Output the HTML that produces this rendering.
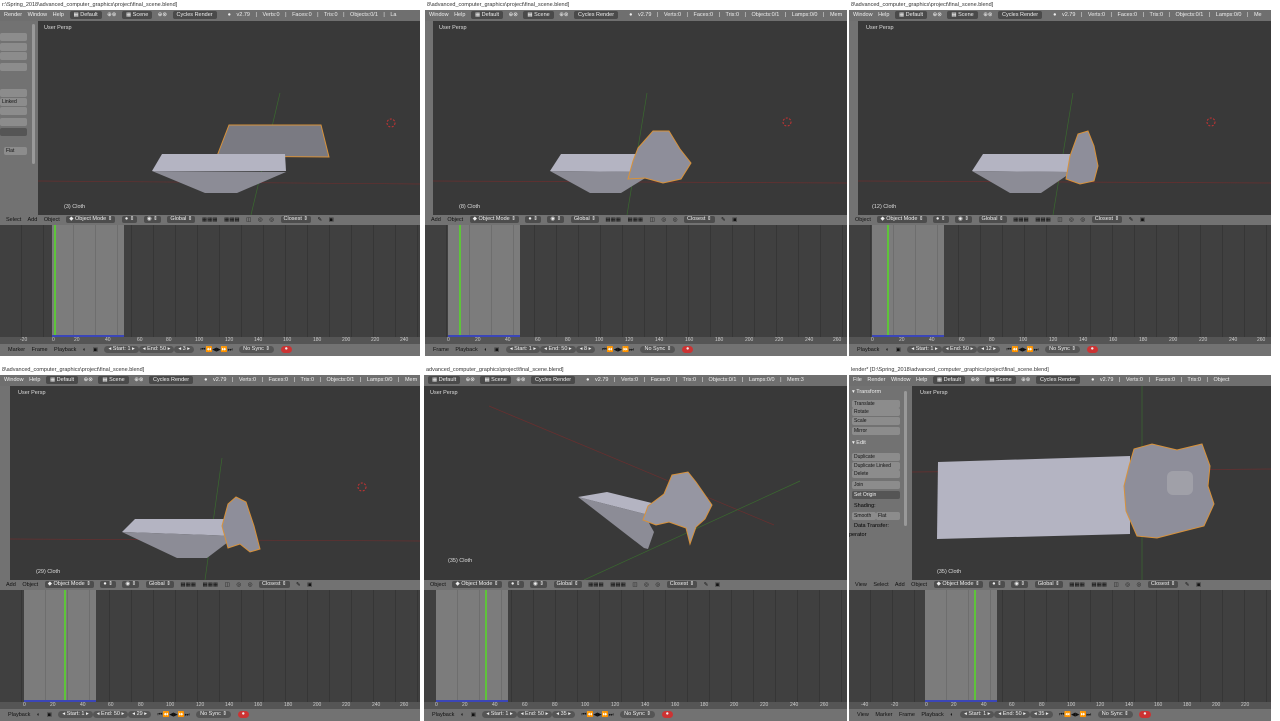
<!DOCTYPE html>
<html><head><meta charset="utf-8"><style>
*{margin:0;padding:0;box-sizing:border-box}
body{width:1280px;height:720px;background:#fff;position:relative;overflow:hidden;font-family:"Liberation Sans",sans-serif;font-size:5.5px;color:#000}
.p{position:absolute;height:356px;overflow:hidden;background:#fff}
.t{position:absolute;left:0;right:0;top:0;height:10px;font-size:5.5px;color:#333;line-height:10px;padding-left:2px;white-space:nowrap}
.h{position:absolute;left:0;right:0;top:10px;height:11px;background:#6f6f6f;color:#eee;line-height:11px;white-space:nowrap;padding-left:4px;word-spacing:4px}
.h b{display:inline-block;background:#4a4a4a;border-radius:2px;padding:0 4px;font-weight:normal;line-height:8px;height:8px;vertical-align:middle;word-spacing:0}
.v{position:absolute;left:0;right:0;top:21px;height:194px;background:#393939;overflow:hidden}
.v svg{position:absolute;left:0;top:0}
.lab{position:absolute;color:#ddd;font-size:5.5px}
.sh{position:absolute;left:0;top:21px;height:194px;background:#727272}
.h3{position:absolute;left:0;right:0;top:215px;height:10px;background:#727272;color:#111;line-height:10px;white-space:nowrap;padding-left:6px;word-spacing:5px}
.h3 b{display:inline-block;background:#4d4d4d;color:#eee;border-radius:2px;font-weight:normal;line-height:7px;padding:0 3px;vertical-align:middle;word-spacing:0}
.tl{position:absolute;left:0;right:0;top:225px;height:112px;background:#404040 repeating-linear-gradient(90deg,transparent 0 21px,#363636 21px 22px)}
.band{position:absolute;top:0;height:112px;background:#7c7c7c repeating-linear-gradient(90deg,transparent 0 21px,#6e6e6e 21px 22px)}
.gl{position:absolute;top:0;height:112px;width:2px;background:#5ec43a}
.bl{position:absolute;bottom:0;height:2px;background:#3b46b8}
.r{position:absolute;left:0;right:0;top:337px;height:7px;background:#555;color:#ccc;font-size:5px;line-height:7px;white-space:nowrap}
.r span{position:absolute}
.bh{position:absolute;left:0;right:0;top:344px;height:12px;background:#727272;color:#111;line-height:12px;white-space:nowrap;padding-left:8px;word-spacing:5px}
.bh b{display:inline-block;background:#555;color:#eee;border-radius:4px;font-weight:normal;line-height:7px;padding:0 4px;vertical-align:middle;word-spacing:0}
.btn{position:absolute;background:#8c8c8c;border-radius:2px;height:8px;color:#111;font-size:5px;line-height:8px;padding-left:2px}
</style></head><body>

<!-- Panel A -->
<div class="p" style="left:0;top:0;width:420px">
<div class="t">r:\Spring_2018\advanced_computer_graphics\project\final_scene.blend]</div>
<div class="h">Render Window Help <b>▦ Default</b> ⊕⊗ <b>▦ Scene</b> ⊕⊗ <b>Cycles Render</b> &nbsp;● v2.79 | Verts:0 | Faces:0 | Tris:0 | Objects:0/1 | La</div>
<div class="v" style="left:38px">
<svg width="382" height="194">
<line x1="0" y1="160" x2="382" y2="163" stroke="#6a2f2f" stroke-width="0.7"/>
<line x1="242" y1="72" x2="213" y2="194" stroke="#3a6a2f" stroke-width="0.7"/>
<polygon points="179,135 191,104 283,104 291,136" fill="#7a7a82" stroke="#d8923a" stroke-width="1"/>
<polygon points="114,150 124,133 247,133 248,150" fill="#b4b4c2"/>
<polygon points="114,150 248,151 199,172 167,172" fill="#8c8c96"/>
<circle cx="353" cy="102" r="4" fill="none" stroke="#c33" stroke-width="1" stroke-dasharray="2 1.5"/>
</svg>
<div class="lab" style="left:6px;top:4px">User Persp</div>
<div class="lab" style="left:26px;top:183px">(3) Cloth</div>
</div>
<div class="sh" style="width:38px">
<div class="btn" style="left:0;top:12px;width:27px"></div><div class="btn" style="left:0;top:22px;width:27px"></div><div class="btn" style="left:0;top:31px;width:27px"></div><div class="btn" style="left:0;top:42px;width:27px"></div>
<div class="btn" style="left:0;top:68px;width:27px"></div><div class="btn" style="left:0;top:77px;width:27px">Linked</div><div class="btn" style="left:0;top:86px;width:27px"></div><div class="btn" style="left:0;top:97px;width:27px"></div><div class="btn" style="left:0;top:107px;width:27px;background:#555"></div>
<div class="btn" style="left:4px;top:126px;width:23px">Flat</div>
<div style="position:absolute;left:32px;top:3px;width:3px;height:140px;background:#999;border-radius:2px"></div>
</div>
<div class="h3">Select Add Object <b>◆ Object Mode ⇕</b> <b>● ⇕</b> <b>◉ ⇕</b> <b>Global ⇕</b> ▦▦▦ ▦▦▦ ◫ ◎ ◎ <b>Closest ⇕</b> ✎ ▣</div>
<div class="tl"><div class="band" style="left:52px;width:72px"></div><div class="gl" style="left:54px"></div><div class="bl" style="left:52px;width:72px"></div></div>
<div class="r"><span style="left:20px">-20</span><span style="left:52px">0</span><span style="left:74px">20</span><span style="left:105px">40</span><span style="left:137px">60</span><span style="left:166px">80</span><span style="left:195px">100</span><span style="left:225px">120</span><span style="left:254px">140</span><span style="left:283px">160</span><span style="left:313px">180</span><span style="left:342px">200</span><span style="left:371px">220</span><span style="left:400px">240</span></div>
<div class="bh">Marker Frame Playback ◐ ▣ <b>◂ Start: 1 ▸</b><b>◂ End: 50 ▸</b><b>◂ 3 ▸</b> ⏮⏪◀▶⏩⏭ <b>No Sync ⇕</b> <b style="background:#c33">●</b></div>
</div>

<!-- Panel B -->
<div class="p" style="left:425px;top:0;width:422px">
<div class="t">8\advanced_computer_graphics\project\final_scene.blend]</div>
<div class="h">Window Help <b>▦ Default</b> ⊕⊗ <b>▦ Scene</b> ⊕⊗ <b>Cycles Render</b> &nbsp;● v2.79 | Verts:0 | Faces:0 | Tris:0 | Objects:0/1 | Lamps:0/0 | Mem</div>
<div class="v" style="left:8px">
<svg width="414" height="194">
<line x1="0" y1="160" x2="414" y2="162" stroke="#6a2f2f" stroke-width="0.7"/>
<line x1="214" y1="72" x2="194" y2="194" stroke="#3a6a2f" stroke-width="0.7"/>
<polygon points="117,150 128,133 220,133 222,151" fill="#b4b4c2"/>
<polygon points="117,150 222,151 188,172 157,172" fill="#8c8c96"/>
<polygon points="205,127 220,110 236,110 247,128 258,142 248,158 230,162 212,157 195,158 200,140" fill="#8e8e9a" stroke="#d8923a" stroke-width="1"/>
<circle cx="354" cy="101" r="4" fill="none" stroke="#c33" stroke-width="1" stroke-dasharray="2 1.5"/>
</svg>
<div class="lab" style="left:6px;top:4px">User Persp</div>
<div class="lab" style="left:26px;top:183px">(8) Cloth</div>
</div>
<div class="sh" style="width:8px"></div>
<div class="h3">Add Object <b>◆ Object Mode ⇕</b> <b>● ⇕</b> <b>◉ ⇕</b> <b>Global ⇕</b> ▦▦▦ ▦▦▦ ◫ ◎ ◎ <b>Closest ⇕</b> ✎ ▣</div>
<div class="tl"><div class="band" style="left:23px;width:72px"></div><div class="gl" style="left:34px"></div><div class="bl" style="left:23px;width:72px"></div></div>
<div class="r"><span style="left:22px">0</span><span style="left:50px">20</span><span style="left:80px">40</span><span style="left:110px">60</span><span style="left:140px">80</span><span style="left:170px">100</span><span style="left:200px">120</span><span style="left:230px">140</span><span style="left:260px">160</span><span style="left:290px">180</span><span style="left:320px">200</span><span style="left:350px">220</span><span style="left:380px">240</span><span style="left:408px">260</span></div>
<div class="bh">Frame Playback ◐ ▣ <b>◂ Start: 1 ▸</b><b>◂ End: 50 ▸</b><b>◂ 8 ▸</b> ⏮⏪◀▶⏩⏭ <b>No Sync ⇕</b> <b style="background:#c33">●</b></div>
</div>

<!-- Panel C -->
<div class="p" style="left:849px;top:0;width:422px">
<div class="t">8\advanced_computer_graphics\project\final_scene.blend]</div>
<div class="h">Window Help <b>▦ Default</b> ⊕⊗ <b>▦ Scene</b> ⊕⊗ <b>Cycles Render</b> &nbsp;● v2.79 | Verts:0 | Faces:0 | Tris:0 | Objects:0/1 | Lamps:0/0 | Me</div>
<div class="v" style="left:9px">
<svg width="413" height="194">
<line x1="0" y1="160" x2="413" y2="162" stroke="#6a2f2f" stroke-width="0.7"/>
<line x1="215" y1="72" x2="195" y2="194" stroke="#3a6a2f" stroke-width="0.7"/>
<polygon points="114,150 125,133 212,133 214,151" fill="#b4b4c2"/>
<polygon points="114,150 214,151 183,172 152,172" fill="#8c8c96"/>
<polygon points="220,113 230,110 236,125 240,145 236,160 222,163 208,158 212,135" fill="#8e8e9a" stroke="#d8923a" stroke-width="1"/>
<circle cx="353" cy="101" r="4" fill="none" stroke="#c33" stroke-width="1" stroke-dasharray="2 1.5"/>
</svg>
<div class="lab" style="left:8px;top:4px">User Persp</div>
<div class="lab" style="left:14px;top:183px">(12) Cloth</div>
</div>
<div class="sh" style="width:9px"></div>
<div class="h3">Object <b>◆ Object Mode ⇕</b> <b>● ⇕</b> <b>◉ ⇕</b> <b>Global ⇕</b> ▦▦▦ ▦▦▦ ◫ ◎ ◎ <b>Closest ⇕</b> ✎ ▣</div>
<div class="tl"><div class="band" style="left:23px;width:72px"></div><div class="gl" style="left:38px"></div><div class="bl" style="left:23px;width:72px"></div></div>
<div class="r"><span style="left:22px">0</span><span style="left:50px">20</span><span style="left:80px">40</span><span style="left:110px">60</span><span style="left:140px">80</span><span style="left:170px">100</span><span style="left:200px">120</span><span style="left:230px">140</span><span style="left:260px">160</span><span style="left:290px">180</span><span style="left:320px">200</span><span style="left:350px">220</span><span style="left:380px">240</span><span style="left:408px">260</span></div>
<div class="bh">Playback ◐ ▣ <b>◂ Start: 1 ▸</b><b>◂ End: 50 ▸</b><b>◂ 12 ▸</b> ⏮⏪◀▶⏩⏭ <b>No Sync ⇕</b> <b style="background:#c33">●</b></div>
</div>

<!-- Panel D -->
<div class="p" style="left:0;top:365px;width:420px">
<div class="t">8\advanced_computer_graphics\project\final_scene.blend]</div>
<div class="h">Window Help <b>▦ Default</b> ⊕⊗ <b>▦ Scene</b> ⊕⊗ <b>Cycles Render</b> &nbsp;● v2.79 | Verts:0 | Faces:0 | Tris:0 | Objects:0/1 | Lamps:0/0 | Mem</div>
<div class="v" style="left:10px">
<svg width="410" height="194">
<line x1="0" y1="153" x2="410" y2="155" stroke="#6a2f2f" stroke-width="0.7"/>
<line x1="212" y1="72" x2="195" y2="194" stroke="#3a6a2f" stroke-width="0.7"/>
<polygon points="112,146 125,133 220,133 226,150" fill="#b4b4c2"/>
<polygon points="112,146 226,150 197,172 167,172" fill="#8c8c96"/>
<polygon points="218,118 226,111 236,116 244,140 250,163 240,166 230,158 218,162 212,140" fill="#8e8e9a" stroke="#d8923a" stroke-width="1"/>
<circle cx="352" cy="101" r="4" fill="none" stroke="#c33" stroke-width="1" stroke-dasharray="2 1.5"/>
</svg>
<div class="lab" style="left:8px;top:4px">User Persp</div>
<div class="lab" style="left:26px;top:183px">(29) Cloth</div>
</div>
<div class="sh" style="width:10px"></div>
<div class="h3">Add Object <b>◆ Object Mode ⇕</b> <b>● ⇕</b> <b>◉ ⇕</b> <b>Global ⇕</b> ▦▦▦ ▦▦▦ ◫ ◎ ◎ <b>Closest ⇕</b> ✎ ▣</div>
<div class="tl"><div class="band" style="left:24px;width:72px"></div><div class="gl" style="left:64px"></div><div class="bl" style="left:24px;width:72px"></div></div>
<div class="r"><span style="left:23px">0</span><span style="left:50px">20</span><span style="left:80px">40</span><span style="left:108px">60</span><span style="left:138px">80</span><span style="left:166px">100</span><span style="left:196px">120</span><span style="left:225px">140</span><span style="left:254px">160</span><span style="left:284px">180</span><span style="left:313px">200</span><span style="left:342px">220</span><span style="left:372px">240</span><span style="left:400px">260</span></div>
<div class="bh">Playback ◐ ▣ <b>◂ Start: 1 ▸</b><b>◂ End: 50 ▸</b><b>◂ 29 ▸</b> ⏮⏪◀▶⏩⏭ <b>No Sync ⇕</b> <b style="background:#c33">●</b></div>
</div>

<!-- Panel E -->
<div class="p" style="left:424px;top:365px;width:423px">
<div class="t">advanced_computer_graphics\project\final_scene.blend]</div>
<div class="h"><b>▦ Default</b> ⊕⊗ <b>▦ Scene</b> ⊕⊗ <b>Cycles Render</b> &nbsp;● v2.79 | Verts:0 | Faces:0 | Tris:0 | Objects:0/1 | Lamps:0/0 | Mem:3</div>
<div class="v" style="left:0">
<svg width="423" height="194">
<line x1="65" y1="20" x2="350" y2="139" stroke="#6a2f2f" stroke-width="0.7"/>
<line x1="160" y1="194" x2="376" y2="95" stroke="#3a6a2f" stroke-width="0.7"/>
<polygon points="154,111 183,106 236,119 221,128" fill="#b4b4c2"/>
<polygon points="154,111 221,128 226,139 230,146 224,163 220,162" fill="#8c8c96"/>
<polygon points="248,89 264,86 272,96 288,119 281,133 272,141 266,158 262,142 245,136 232,139 219,134 224,120 240,108" fill="#9696a2" stroke="#d8923a" stroke-width="1"/>
</svg>
<div class="lab" style="left:6px;top:4px">User Persp</div>
<div class="lab" style="left:24px;top:172px">(35) Cloth</div>
</div>
<div class="h3">Object <b>◆ Object Mode ⇕</b> <b>● ⇕</b> <b>◉ ⇕</b> <b>Global ⇕</b> ▦▦▦ ▦▦▦ ◫ ◎ ◎ <b>Closest ⇕</b> ✎ ▣</div>
<div class="tl"><div class="band" style="left:12px;width:72px"></div><div class="gl" style="left:61px"></div><div class="bl" style="left:12px;width:72px"></div></div>
<div class="r"><span style="left:11px">0</span><span style="left:38px">20</span><span style="left:68px">40</span><span style="left:98px">60</span><span style="left:128px">80</span><span style="left:157px">100</span><span style="left:187px">120</span><span style="left:217px">140</span><span style="left:247px">160</span><span style="left:276px">180</span><span style="left:306px">200</span><span style="left:336px">220</span><span style="left:366px">240</span><span style="left:396px">260</span></div>
<div class="bh">Playback ◐ ▣ <b>◂ Start: 1 ▸</b><b>◂ End: 50 ▸</b><b>◂ 35 ▸</b> ⏮⏪◀▶⏩⏭ <b>No Sync ⇕</b> <b style="background:#c33">●</b></div>
</div>

<!-- Panel F -->
<div class="p" style="left:849px;top:365px;width:422px">
<div class="t">lender* [D:\Spring_2018\advanced_computer_graphics\project\final_scene.blend]</div>
<div class="h">File Render Window Help <b>▦ Default</b> ⊕⊗ <b>▦ Scene</b> ⊕⊗ <b>Cycles Render</b> &nbsp;● v2.79 | Verts:0 | Faces:0 | Tris:0 | Object</div>
<div class="v" style="left:63px">
<svg width="359" height="194">
<line x1="0" y1="86" x2="359" y2="83" stroke="#6a2f2f" stroke-width="0.7"/>
<line x1="230" y1="0" x2="230" y2="194" stroke="#3a6a2f" stroke-width="0.7"/>
<polygon points="26,76 218,70 218,148 25,153" fill="#b4b4c2"/>
<polygon points="222,63 240,58 265,64 290,58 298,80 296,100 302,118 292,140 272,145 245,152 225,150 214,125 212,100 217,80" fill="#8e8e9a" stroke="#d8923a" stroke-width="1"/>
<rect x="255" y="85" width="26" height="24" rx="6" fill="#a0a0a8"/>
</svg>
<div class="lab" style="left:8px;top:4px">User Persp</div>
<div class="lab" style="left:25px;top:183px">(35) Cloth</div>
</div>
<div class="sh" style="width:63px">
<div style="position:absolute;left:3px;top:3px;color:#eee">▾ Transform</div>
<div class="btn" style="left:3px;top:14px;width:48px">Translate</div><div class="btn" style="left:3px;top:22px;width:48px">Rotate</div><div class="btn" style="left:3px;top:31px;width:48px">Scale</div><div class="btn" style="left:3px;top:41px;width:48px">Mirror</div>
<div style="position:absolute;left:3px;top:54px;color:#eee">▾ Edit</div>
<div class="btn" style="left:3px;top:67px;width:48px">Duplicate</div><div class="btn" style="left:3px;top:76px;width:48px">Duplicate Linked</div><div class="btn" style="left:3px;top:84px;width:48px">Delete</div><div class="btn" style="left:3px;top:95px;width:48px">Join</div><div class="btn" style="left:3px;top:105px;width:48px;background:#555;color:#eee">Set Origin</div>
<div style="position:absolute;left:5px;top:117px">Shading:</div>
<div class="btn" style="left:3px;top:126px;width:24px">Smooth</div><div class="btn" style="left:27px;top:126px;width:24px">Flat</div>
<div style="position:absolute;left:5px;top:137px">Data Transfer:</div>
<div style="position:absolute;left:0;top:146px">perator</div>
<div style="position:absolute;left:55px;top:5px;width:3px;height:135px;background:#999;border-radius:2px"></div>
</div>
<div class="h3">View Select Add Object <b>◆ Object Mode ⇕</b> <b>● ⇕</b> <b>◉ ⇕</b> <b>Global ⇕</b> ▦▦▦ ▦▦▦ ◫ ◎ ◎ <b>Closest ⇕</b> ✎ ▣</div>
<div class="tl"><div class="band" style="left:76px;width:72px"></div><div class="gl" style="left:125px"></div><div class="bl" style="left:76px;width:72px"></div></div>
<div class="r"><span style="left:12px">-40</span><span style="left:42px">-20</span><span style="left:76px">0</span><span style="left:102px">20</span><span style="left:132px">40</span><span style="left:160px">60</span><span style="left:190px">80</span><span style="left:218px">100</span><span style="left:247px">120</span><span style="left:276px">140</span><span style="left:305px">160</span><span style="left:334px">180</span><span style="left:363px">200</span><span style="left:392px">220</span></div>
<div class="bh">View Marker Frame Playback ◐ <b>◂ Start: 1 ▸</b><b>◂ End: 50 ▸</b><b>◂ 35 ▸</b> ⏮⏪◀▶⏩⏭ <b>No Sync ⇕</b> <b style="background:#c33">●</b></div>
</div>

</body></html>
